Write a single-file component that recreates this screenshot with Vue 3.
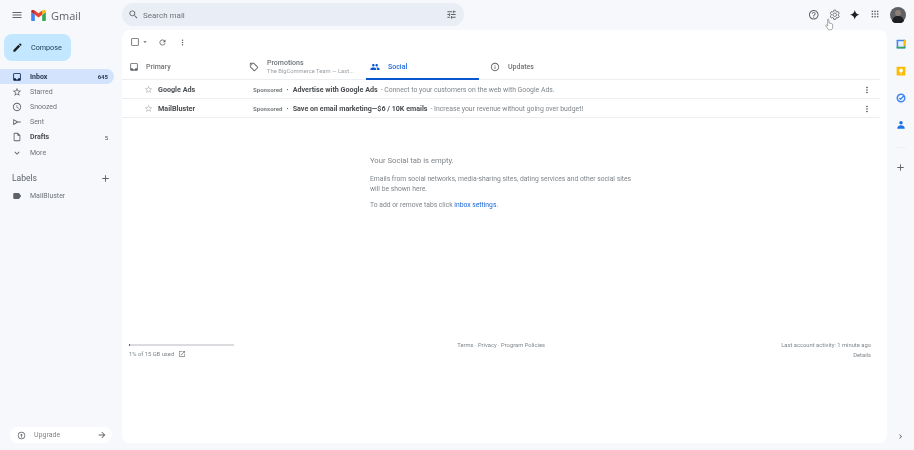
<script setup>
// Gmail inbox, Social tab
const ic = {
  inbox: "M19 3H4.99c-1.11 0-1.98.89-1.98 2L3 19c0 1.1.88 2 1.99 2H19c1.1 0 2-.9 2-2V5c0-1.11-.9-2-2-2zm0 12h-4c0 1.66-1.35 3-3 3s-3-1.34-3-3H4.99V5H19v10z",
  star: "M22 9.24l-7.19-.62L12 2 9.19 8.63 2 9.24l5.46 4.73L5.82 21 12 17.27 18.18 21l-1.63-7.03L22 9.24zM12 15.4l-3.76 2.27 1-4.28-3.32-2.88 4.38-.38L12 6.1l1.71 4.04 4.38.38-3.32 2.88 1 4.28L12 15.4z",
  clock: "M11.99 2C6.47 2 2 6.48 2 12s4.47 10 9.99 10C17.52 22 22 17.52 22 12S17.52 2 11.99 2zM12 20c-4.42 0-8-3.58-8-8s3.58-8 8-8 8 3.58 8 8-3.58 8-8 8zm.5-13H11v6l5.25 3.15.75-1.23-4.5-2.67V7z",
  sent: "M3 4.500v15L14 13h7v-2h-7L3 4.500zM5 8.200L11.500 12 5 15.800V8.200z",
  draft: "M14 2H6c-1.1 0-2 .9-2 2v16c0 1.1.9 2 2 2h12c1.1 0 2-.9 2-2V8l-6-6zM6 20V4h7v5h5v11H6z",
  more: "M7.41 8.59L12 13.17l4.59-4.58L18 10l-6 6-6-6z",
  label: "M17.63 5.84C17.27 5.33 16.67 5 16 5L5 5.01C3.9 5.01 3 5.9 3 7v10c0 1.1.9 1.99 2 1.99L16 19c.67 0 1.27-.33 1.63-.84L22 12l-4.37-6.16z",
  tag: "M21.41 11.58l-9-9C12.05 2.22 11.55 2 11 2H4c-1.1 0-2 .9-2 2v7c0 .55.22 1.05.59 1.42l9 9c.36.36.86.58 1.41.58s1.05-.22 1.41-.59l7-7c.37-.36.59-.86.59-1.41s-.23-1.06-.59-1.42zM13 20.01L4 11V4h7v-.01l9 9-7 7.02zM6.5 5A1.5 1.5 0 1 0 6.5 8 1.5 1.5 0 1 0 6.5 5z",
  people: "M16 11c1.66 0 2.99-1.34 2.99-3S17.66 5 16 5s-3 1.34-3 3 1.34 3 3 3zm-8 0c1.66 0 2.99-1.34 2.99-3S9.66 5 8 5 5 6.34 5 8s1.34 3 3 3zm0 2c-2.33 0-7 1.17-7 3.5V19h14v-2.5c0-2.33-4.67-3.5-7-3.5zm8 0c-.29 0-.62.02-.97.05 1.16.84 1.97 1.97 1.97 3.45V19h6v-2.5c0-2.33-4.67-3.5-7-3.5z",
  info: "M11 7h2v2h-2zm0 4h2v6h-2zm1-9C6.48 2 2 6.48 2 12s4.48 10 10 10 10-4.48 10-10S17.52 2 12 2zm0 18c-4.41 0-8-3.59-8-8s3.59-8 8-8 8 3.59 8 8-3.59 8-8 8z",
  dots: "M12 8c1.1 0 2-.9 2-2s-.9-2-2-2-2 .9-2 2 .9 2 2 2zm0 2c-1.1 0-2 .9-2 2s.9 2 2 2 2-.9 2-2-.9-2-2-2zm0 6c-1.1 0-2 .9-2 2s.9 2 2 2 2-.9 2-2-.9-2-2-2z",
  refresh: "M17.65 6.35C16.2 4.9 14.21 4 12 4c-4.42 0-7.99 3.58-7.99 8s3.57 8 7.99 8c3.73 0 6.84-2.55 7.73-6h-2.08c-.82 2.33-3.04 4-5.65 4-3.31 0-6-2.69-6-6s2.69-6 6-6c1.66 0 3.14.69 4.22 1.78L13 11h7V4l-2.35 2.35z",
  search: "M15.5 14h-.79l-.28-.27C15.41 12.59 16 11.11 16 9.5 16 5.91 13.09 3 9.5 3S3 5.91 3 9.5 5.91 16 9.5 16c1.61 0 3.09-.59 4.23-1.57l.27.28v.79l5 4.99L20.49 19l-4.99-5zm-6 0C7.01 14 5 11.99 5 9.5S7.01 5 9.5 5 14 7.01 14 9.5 11.99 14 9.5 14z",
  tune: "M3 17v2h6v-2H3zM3 5v2h10V5H3zm10 16v-2h8v-2h-8v-2h-2v6h2zM7 9v2H3v2h4v2h2V9H7zm14 4v-2H11v2h10zm-6-4h2V7h4V5h-4V3h-2v6z",
  help: "M11 18h2v-2h-2v2zm1-16C6.48 2 2 6.48 2 12s4.48 10 10 10 10-4.48 10-10S17.52 2 12 2zm0 18c-4.41 0-8-3.59-8-8s3.59-8 8-8 8 3.59 8 8-3.59 8-8 8zm0-14c-2.21 0-4 1.79-4 4h2c0-1.1.9-2 2-2s2 .9 2 2c0 2-3 1.75-3 5h2c0-2.25 3-2.5 3-5 0-2.21-1.79-4-4-4z",
  gear: "M19.14 12.94c.04-.3.06-.61.06-.94 0-.32-.02-.64-.07-.94l2.03-1.58c.18-.14.23-.41.12-.61l-1.92-3.32c-.12-.22-.37-.29-.59-.22l-2.39.96c-.5-.38-1.03-.7-1.62-.94l-.36-2.54c-.04-.24-.24-.41-.48-.41h-3.84c-.24 0-.43.17-.47.41l-.36 2.54c-.59.24-1.13.57-1.62.94l-2.39-.96c-.22-.08-.47 0-.59.22L2.74 8.87c-.12.21-.08.47.12.61l2.03 1.58c-.05.3-.09.63-.09.94s.02.64.07.94l-2.03 1.58c-.18.14-.23.41-.12.61l1.92 3.32c.12.22.37.29.59.22l2.39-.96c.5.38 1.03.7 1.62.94l.36 2.54c.05.24.24.41.48.41h3.84c.24 0 .44-.17.47-.41l.36-2.54c.59-.24 1.13-.56 1.62-.94l2.39.96c.22.08.47 0 .59-.22l1.92-3.32c.12-.22.07-.47-.12-.61l-2.01-1.58zM12 15.6c-1.98 0-3.6-1.62-3.6-3.6s1.62-3.6 3.6-3.6 3.6 1.62 3.6 3.6-1.62 3.6-3.6 3.6z",
  spark: "M12 2c.8 5.6 4.4 9.2 10 10-5.6.8-9.2 4.4-10 10-.8-5.6-4.4-9.2-10-10 5.6-.8 9.2-4.4 10-10z",
  menu: "M3 18h18v-2H3v2zm0-5h18v-2H3v2zm0-7v2h18V6H3z",
  plus: "M19 13h-6v6h-2v-6H5v-2h6V5h2v6h6v2z",
  arrow: "M12 4l-1.41 1.41L16.17 11H4v2h12.17l-5.58 5.59L12 20l8-8z",
  open: "M19 19H5V5h7V3H5c-1.1 0-2 .9-2 2v14c0 1.1.9 2 2 2h14c1.1 0 2-.9 2-2v-7h-2v7zM14 3v2h3.59l-9.83 9.83 1.41 1.41L19 6.41V10h2V3h-7z",
  upgrade: "M12 2C6.48 2 2 6.48 2 12s4.48 10 10 10 10-4.48 10-10S17.52 2 12 2zm0 18c-4.41 0-8-3.59-8-8s3.59-8 8-8 8 3.59 8 8-3.59 8-8 8zm-1-3h2v-6h3l-4-4-4 4h3v6z",
  pencil: "M3 17.25V21h3.75L17.81 9.94l-3.75-3.75L3 17.25zM20.71 7.04a1 1 0 0 0 0-1.41l-2.34-2.34a1 1 0 0 0-1.41 0l-1.83 1.83 3.75 3.75 1.83-1.83z",
  caret: "M7 10l5 5 5-5z",
  check: "M19 5v14H5V5h14m0-2H5c-1.1 0-2 .9-2 2v14c0 1.1.9 2 2 2h14c1.1 0 2-.9 2-2V5c0-1.1-.9-2-2-2z",
  chevron: "M10 6L8.59 7.41 13.17 12l-4.58 4.59L10 18l6-6z",
}

const nav = [
  { name: "Inbox", icon: ic.inbox, count: "645", active: true },
  { name: "Starred", icon: ic.star },
  { name: "Snoozed", icon: ic.clock },
  { name: "Sent", icon: ic.sent },
  { name: "Drafts", icon: ic.draft, count: "5", bold: true },
  { name: "More", icon: ic.more },
]

const rows = [
  { from: "Google Ads", title: "Advertise with Google Ads", text: "Connect to your customers on the web with Google Ads." },
  { from: "MailBluster", title: "Save on email marketing—$6 / 10K emails", text: "Increase your revenue without going over budget!" },
]

const appDots = []
for (let y of [5, 10.5, 16]) for (let x of [5, 10.5, 16]) appDots.push({ x, y })
</script>

<template>
  <div class="page">
    <header class="topbar">
      <div class="brand">
        <svg class="hamb" viewBox="0 0 24 24"><path :d="ic.menu" /></svg>
        <svg class="mlogo" viewBox="0 0 28 21">
          <path d="M2 21h5V9L0 4v15c0 1.1.9 2 2 2z" fill="#4285f4" />
          <path d="M21 21h5c1.1 0 2-.9 2-2V4l-7 5z" fill="#34a853" />
          <path d="M21 1v8l7-5V2.5C28 .3 25.5-.9 23.8.4z" fill="#fbbc04" />
          <path d="M7 9V1l7 5.2L21 1v8l-7 5.2z" fill="#ea4335" />
          <path d="M0 2.5V4l7 5V1L4.200.4C2.500-.9 0 .3 0 2.500z" fill="#c5221f" />
        </svg>
        <span class="wordmark">Gmail</span>
      </div>
      <div class="search">
        <svg class="i11" viewBox="0 0 24 24"><path :d="ic.search" /></svg>
        <span class="search-ph">Search mail</span>
        <svg class="i11 tune" viewBox="0 0 24 24"><path :d="ic.tune" /></svg>
      </div>
      <div class="top-actions">
        <svg class="act" viewBox="0 0 24 24"><path :d="ic.help" /></svg>
        <svg class="act" viewBox="0 0 24 24"><path :d="ic.gear" fill="none" stroke="#54575a" stroke-width="1.700" /></svg>
        <svg class="act dark" viewBox="0 0 24 24"><path :d="ic.spark" /></svg>
        <svg class="act" viewBox="0 0 24 24"><rect v-for="d in appDots" :key="d.x + '-' + d.y" :x="d.x - 1.500" :y="d.y - 1.500" width="3" height="3" /></svg>
        <svg class="avatar" viewBox="0 0 16 16">
          <circle cx="8" cy="8" r="8" fill="#5f6164" />
          <circle cx="8" cy="6" r="3" fill="#8a8078" />
          <path d="M2 14c1-4 3-5 6-5s5 1 6 5a8 8 0 0 1-12 0z" fill="#1f1f22" />
        </svg>
      </div>
    </header>

    <div class="body">
      <aside class="side">
        <button class="compose">
          <svg class="i11" viewBox="0 0 24 24"><path :d="ic.pencil" fill="#1f1f1f" /></svg>
          <span>Compose</span>
        </button>
        <nav class="nav">
          <div v-for="n in nav" :key="n.name" class="nav-row" :class="{ active: n.active, bold: n.bold }">
            <svg class="i10" viewBox="0 0 24 24"><path :d="n.icon" /></svg>
            <span class="nav-name">{{ n.name }}</span>
            <span v-if="n.count" class="nav-count">{{ n.count }}</span>
          </div>
        </nav>
        <div class="labels-head">
          <span>Labels</span>
          <svg class="i11" viewBox="0 0 24 24"><path :d="ic.plus" /></svg>
        </div>
        <div class="nav-row">
          <svg class="i10" viewBox="0 0 24 24"><path :d="ic.label" /></svg>
          <span class="nav-name">MailBluster</span>
        </div>
        <div class="upgrade">
          <svg class="i9" viewBox="0 0 24 24"><path :d="ic.upgrade" /></svg>
          <span class="upgrade-text">Upgrade</span>
          <svg class="i10" viewBox="0 0 24 24"><path :d="ic.arrow" /></svg>
        </div>
      </aside>

      <main class="card">
        <div class="toolbar">
          <svg class="i10" viewBox="0 0 24 24"><path :d="ic.check" /></svg>
          <svg class="caret" viewBox="0 0 24 24"><path :d="ic.caret" /></svg>
          <svg class="i9 refresh" viewBox="0 0 24 24"><path :d="ic.refresh" /></svg>
          <svg class="i9 tool-dots" viewBox="0 0 24 24"><path :d="ic.dots" /></svg>
        </div>

        <div class="tabs">
          <div class="tab t-primary">
            <svg class="i10" viewBox="0 0 24 24"><path :d="ic.inbox" /></svg>
            <span>Primary</span>
          </div>
          <div class="tab t-promo">
            <svg class="i10" viewBox="0 0 24 24"><path :d="ic.tag" /></svg>
            <div class="promo-text">
              <span>Promotions</span>
              <small>The BigCommerce Team — Last...</small>
            </div>
          </div>
          <div class="tab t-social">
            <svg class="i10" viewBox="0 0 24 24"><path :d="ic.people" /></svg>
            <span>Social</span>
          </div>
          <div class="tab t-updates">
            <svg class="i10" viewBox="0 0 24 24"><path :d="ic.info" /></svg>
            <span>Updates</span>
          </div>
        </div>

        <div v-for="r in rows" :key="r.from" class="mail">
          <svg class="i10 mail-star" viewBox="0 0 24 24"><path :d="ic.star" /></svg>
          <span class="from">{{ r.from }}</span>
          <span class="sponsored">Sponsored</span>
          <span class="bullet">·</span>
          <span class="subject">{{ r.title }}</span>
          <span class="snippet">- {{ r.text }}</span>
          <svg class="i10 mail-dots" viewBox="0 0 24 24"><path :d="ic.dots" /></svg>
        </div>

        <section class="empty">
          <h2>Your Social tab is empty.</h2>
          <p>Emails from social networks, media-sharing sites, dating services and other social sites<br />will be shown here.</p>
          <p>To add or remove tabs click <a>inbox settings</a>.</p>
        </section>

        <footer class="foot">
          <div class="storage">
            <div class="bar"><div class="bar-fill" :style="{ width: '1%' }"></div></div>
            <div class="used">
              <span>1% of 15 GB used</span>
              <svg class="open" viewBox="0 0 24 24"><path :d="ic.open" /></svg>
            </div>
          </div>
          <div class="terms">Terms · Privacy · Program Policies</div>
          <div class="activity">
            <div>Last account activity: 1 minute ago</div>
            <div>Details</div>
          </div>
        </footer>
      </main>

      <aside class="rail">
        <svg class="rail-i" viewBox="0 0 16 16">
          <rect x="1" y="1" width="14" height="14" rx="1" fill="#4285f4" />
          <rect x="3.500" y="3.500" width="9" height="9" fill="#e8f0fe" />
          <path d="M12.500 1H15v10h-2.500z" fill="#fbbc04" />
          <path d="M1 12.500h14V15H1z" fill="#34a853" />
        </svg>
        <svg class="rail-i" viewBox="0 0 16 16">
          <rect x="1" y="1" width="14" height="14" rx="1" fill="#fbbc04" />
          <circle cx="8" cy="7" r="3" fill="#fff" />
          <rect x="6.800" y="10.500" width="2.400" height="1.600" fill="#fff" />
        </svg>
        <svg class="rail-i" viewBox="0 0 16 16">
          <circle cx="8" cy="8" r="6" fill="none" stroke="#4285f4" stroke-width="2.400" />
          <path d="M5.500 8l2 2 5-5.500" fill="none" stroke="#1a73e8" stroke-width="1.800" />
        </svg>
        <svg class="rail-i" viewBox="0 0 16 16">
          <circle cx="8" cy="4.500" r="2.800" fill="#1a73e8" />
          <path d="M2 14c0-4 3-5.500 6-5.500s6 1.500 6 5.500z" fill="#1a73e8" />
        </svg>
        <div class="rail-sep"></div>
        <svg class="i11 rail-plus" viewBox="0 0 24 24"><path :d="ic.plus" /></svg>
        <svg class="i9 rail-chev" viewBox="0 0 24 24"><path :d="ic.chevron" /></svg>
      </aside>
    </div>

    <svg class="cursor" viewBox="0 0 12 16">
      <path d="M3.500 1.200c.7-.6 1.500-.2 1.600.6l.3 4.200 3 .7c1.300.3 2 1 1.900 2.200l-.3 3.400c-.1 1.500-1 2.700-2.500 2.700H6c-1 0-1.700-.4-2.300-1.300L1.200 9.800c-.5-.8.400-1.600 1.200-1l1.200 1.100z" fill="#fff" stroke="#55585a" stroke-width=".7" />
    </svg>
  </div>
</template>

<style>
html, body { margin: 0; background: #f6f8fc; }
</style>

<style scoped>
.page {
  position: relative;
  width: 914px;
  height: 450px;
  overflow: hidden;
  background: #f6f8fc;
  font-family: Roboto, "Liberation Sans", sans-serif;
  color: #5f6368;
  font-size: 7px;
  filter: blur(.3px);
}
svg { display: block; flex: none; fill: #5f6368; }
.i9 { width: 9px; height: 9px; }
.i10 { width: 10px; height: 10px; }
.i11 { width: 11px; height: 11px; }

.topbar {
  height: 30px;
  display: flex;
  align-items: center;
}
.brand {
  width: 122px;
  display: flex;
  align-items: center;
  padding-left: 11px;
  box-sizing: border-box;
}
.hamb { width: 12px; height: 12px; margin-right: 8px; fill: #5f6368; }
.mlogo { width: 15px; height: 11px; margin-right: 5px; }
.wordmark { font-size: 11px; color: #5f6368; font-family: "Open Sans", Roboto, sans-serif; }
.search {
  width: 342px;
  height: 23px;
  margin-top: -1px;
  border-radius: 12px;
  background: #e9eef6;
  display: flex;
  align-items: center;
  padding: 0 7px 0 6px;
  box-sizing: border-box;
}
.search-ph { margin-left: 4px; padding-top: 1px; font-size: 8px; color: #6f7377; }
.tune { margin-left: auto; }
.top-actions {
  margin-left: auto;
  display: flex;
  align-items: center;
  padding-right: 8px;
  gap: 9px;
}
.act { width: 11.500px; height: 11.500px; }
.act.dark { fill: #1f1f1f; }
.avatar { width: 16px; height: 16px; }

.body { display: flex; height: 420px; }
.side {
  width: 122px;
  flex: none;
  display: flex;
  flex-direction: column;
}
.compose {
  width: 67px;
  height: 27px;
  margin: 4px 0 8px 4px;
  border: 0;
  border-radius: 8px;
  background: #c2e7ff;
  display: flex;
  align-items: center;
  gap: 8px;
  padding: 0 0 0 8px;
  font-family: inherit;
  font-size: 7.200px;
  color: #1d3a55;
}
.nav { width: 114px; }
.nav-row {
  width: 114px;
  box-sizing: border-box;
  height: 15.200px;
  display: flex;
  align-items: center;
  padding: 0 6px 0 12px;
  border-radius: 0 8px 8px 0;
  color: #6f7377;
}
.nav-name { margin-left: 8px; }
.nav-count { margin-left: auto; font-size: 6px; }
.nav-row.active { background: #d3e3fd; color: #2a3a55; font-weight: 700; }
.nav-row.active svg { fill: #041e49; }
.nav-row.bold { font-weight: 700; color: #4a4d50; }
.nav-row.bold .nav-count { font-weight: 400; }
.labels-head {
  display: flex;
  align-items: center;
  justify-content: space-between;
  width: 114px;
  box-sizing: border-box;
  padding: 0 3px 0 12px;
  margin: 11px 0 3px;
  height: 14px;
  font-size: 8.500px;
  color: #5f6368;
}
.upgrade {
  margin: auto 0 7px 10px;
  width: 102px;
  height: 16px;
  border-radius: 8px;
  background: #fff;
  box-sizing: border-box;
  padding: 0 5px 0 7px;
  display: flex;
  align-items: center;
}
.upgrade-text { margin-left: 8px; margin-right: auto; color: #80868b; }

.card {
  width: 765px;
  height: 413px;
  flex: none;
  background: #fff;
  border-radius: 8px;
  display: flex;
  flex-direction: column;
  position: relative;
}
.toolbar {
  height: 24px;
  display: flex;
  align-items: center;
  padding-left: 8px;
}
.caret { width: 8px; height: 8px; margin-left: 1px; }
.refresh { margin-left: 9px; }
.tool-dots { margin-left: 11px; }

.tabs {
  height: 26px;
  width: 758px;
  display: flex;
  border-bottom: 1px solid #eceff1;
  box-sizing: border-box;
  color: #6f7377;
  font-weight: 500;
}
.tab {
  display: flex;
  align-items: center;
  box-sizing: border-box;
  gap: 7px;
}
.t-primary { width: 124px; padding-left: 7px; }
.t-promo { width: 120px; padding-left: 3px; gap: 8px; }
.t-social {
  width: 113px;
  padding: 2px 0 0 4px;
  color: #1a66d8;
  border-bottom: 2px solid #0b57d0;
  margin-bottom: -1px;
  gap: 8px;
}
.t-social svg { fill: #0b57d0; }
.t-updates { padding-left: 11px; gap: 8px; }
.promo-text { display: flex; flex-direction: column; gap: 1px; }
.promo-text small { font-size: 5.800px; font-weight: 400; color: #9aa0a6; }

.mail {
  width: 758px;
  height: 19px;
  box-sizing: border-box;
  border-bottom: 1px solid #eceff1;
  display: flex;
  align-items: center;
  padding: 1px 0 0 22px;
  white-space: nowrap;
}
.mail-star { width: 9px; height: 9px; fill: #b4b7b9; }
.from { width: 95px; margin-left: 5px; font-weight: 700; color: #4a4d50; font-size: 7.200px; }
.sponsored { font-size: 6.100px; font-weight: 700; color: #7a7e82; }
.bullet { margin: 0 4px; font-weight: 700; color: #4a4d50; }
.subject { font-weight: 700; color: #4a4d50; font-size: 7.150px; }
.snippet { margin-left: 3px; color: #80868b; font-size: 6.850px; }
.mail-dots { margin-left: auto; margin-right: 8px; fill: #444746; }

.empty {
  width: 270px;
  margin: 37px 0 0 248px;
  color: #80868b;
  font-size: 6.750px;
  line-height: 10px;
}
.empty h2 {
  margin: 0 0 7px;
  font-size: 7.700px;
  font-weight: 400;
  line-height: 12px;
}
.empty p { margin: 0 0 6px; }
.empty a { color: #1a66d8; }

.foot {
  margin-top: 126px;
  padding: 0 16px 0 7px;
  display: flex;
  justify-content: space-between;
  align-items: flex-start;
  color: #80868b;
  font-size: 5.800px;
}
.storage { width: 105px; }
.bar { height: 2px; background: #dadce0; margin-top: 2px; }
.bar-fill { height: 2px; background: #5f6368; }
.used { display: flex; align-items: center; gap: 4px; margin-top: 4px; }
.open { width: 8px; height: 8px; fill: #80868b; }
.terms { margin: 0 0 0 -13px; }
.activity { text-align: right; line-height: 10px; margin-top: -2px; }

.rail {
  width: 27px;
  flex: none;
  display: flex;
  flex-direction: column;
  align-items: center;
  padding-top: 9px;
  box-sizing: border-box;
  height: 420px;
  gap: 17px;
}
.rail-i { width: 10px; height: 10px; }
.rail-sep { width: 10px; height: 1px; background: #eef0f3; }
.rail-plus { margin-top: -3px; }
.rail-chev { margin-top: auto; margin-bottom: 9px; }

.cursor {
  position: absolute;
  left: 825px;
  top: 18px;
  width: 9px;
  height: 13px;
}
</style>
